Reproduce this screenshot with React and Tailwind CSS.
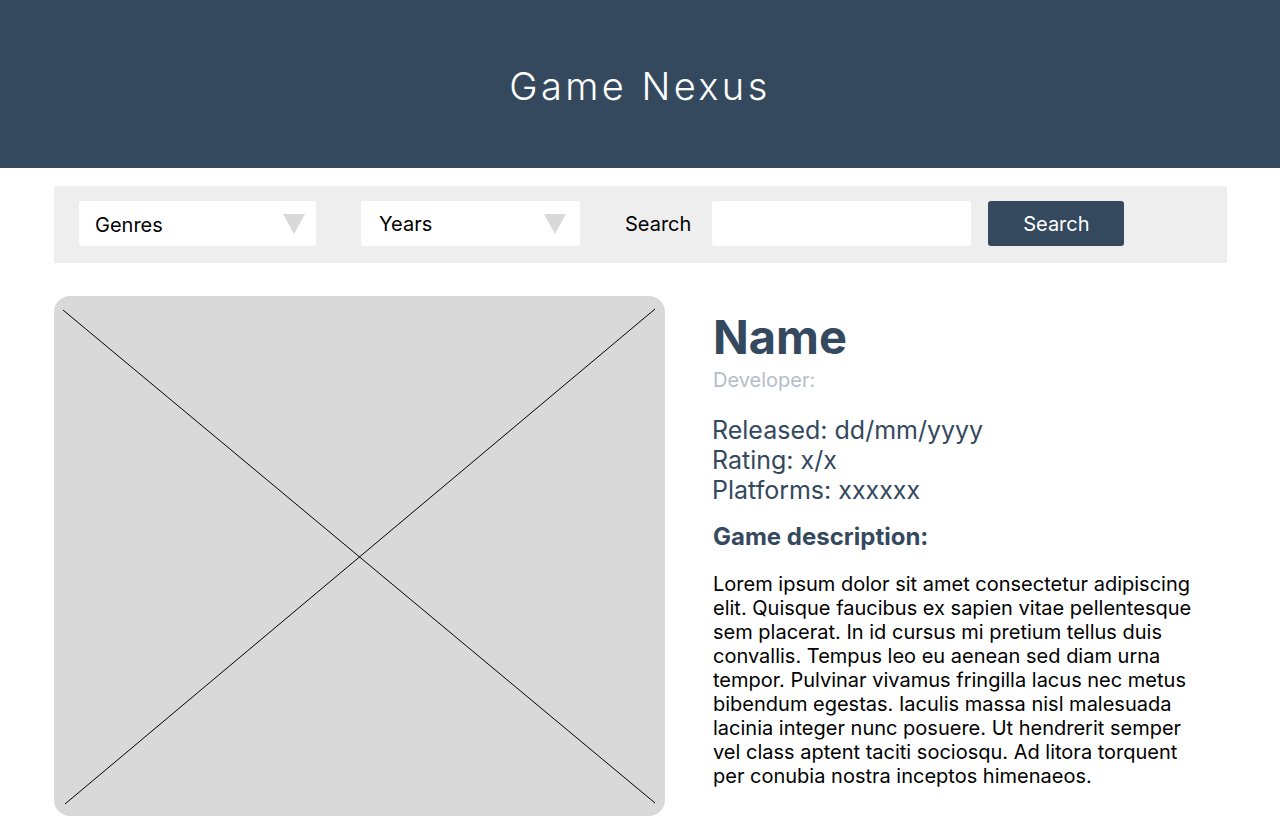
import React from "react";

function Triangle() {
  return (
    <svg width="22" height="20" viewBox="0 0 22 20" className="shrink-0">
      <polygon points="0,0 22,0 11,20" fill="#d9d9d9" />
    </svg>
  );
}

export default function App() {
  return (
    <div className="min-h-[832px] bg-white" style={{ fontFamily: "Inter, 'Noto Sans', sans-serif" }}>
      <header className="h-[168px] bg-[#34495e] flex items-center justify-center">
        <h1 className="text-white text-[38px] font-light tracking-[0.09em] leading-none pt-[4px]">Game Nexus</h1>
      </header>

      <div className="ml-[54px] mt-[18px] w-[1173px] h-[77px] bg-[#eeeeee] flex items-start pt-[15px] pl-[25px]">
        <div className="w-[237px] h-[45px] bg-white rounded-[3px] flex items-center justify-between pl-[16px] pr-[11px]">
          <span className="text-[20px] leading-[24px] text-black pt-[2px]">Genres</span>
          <Triangle />
        </div>
        <div className="ml-[45px] w-[219px] h-[45px] bg-white rounded-[3px] flex items-center justify-between pl-[18px] pr-[14px]">
          <span className="text-[20px] leading-[24px] text-black">Years</span>
          <Triangle />
        </div>
        <span className="ml-[45px] h-[45px] flex items-center text-[20px] leading-[24px] text-black">Search</span>
        <div className="ml-[21px] w-[259px] h-[45px] bg-white rounded-[3px]" />
        <button className="ml-[17px] w-[136px] h-[45px] bg-[#34495e] rounded-[3px] text-white text-[20px] leading-[24px]">Search</button>
      </div>

      <div className="mx-[54px] mt-[33px] flex">
        <div className="relative w-[611px] h-[520px] bg-[#d9d9d9] rounded-[16px] overflow-hidden shrink-0">
          <svg className="absolute inset-0" width="611" height="520" viewBox="0 0 611 520">
            <line x1="9" y1="14" x2="601" y2="507" stroke="#000" strokeWidth="1" />
            <line x1="601" y1="13" x2="11" y2="508" stroke="#000" strokeWidth="1" />
          </svg>
        </div>
        <div className="ml-[48px] w-[490px] pt-[17px]">
          <h2 className="text-[47px] leading-[48px] font-bold text-[#34495e]">Name</h2>
          <p className="mt-[7px] text-[20px] leading-[24px] text-[#b5bec8]">Developer:</p>
          <div className="mt-[23px] text-[25px] leading-[30px] text-[#34495e]">
            <p className="-ml-[1px]">Released: dd/mm/yyyy</p>
            <p className="-ml-[1px]">Rating: x/x</p>
            <p className="-ml-[1px]">Platforms: xxxxxx</p>
          </div>
          <h3 className="mt-[18px] text-[24px] leading-[28px] font-bold text-[#34495e]">Game description:</h3>
          <p className="mt-[21px] text-[20px] leading-[24px] text-black">
            Lorem ipsum dolor sit amet consectetur adipiscing elit. Quisque faucibus ex sapien vitae pellentesque sem placerat. In id cursus mi pretium tellus duis convallis. Tempus leo eu aenean sed diam urna tempor. Pulvinar vivamus fringilla lacus nec metus bibendum egestas. Iaculis massa nisl malesuada lacinia integer nunc posuere. Ut hendrerit semper vel class aptent taciti sociosqu. Ad litora torquent per conubia nostra inceptos himenaeos.
          </p>
        </div>
      </div>
    </div>
  );
}
